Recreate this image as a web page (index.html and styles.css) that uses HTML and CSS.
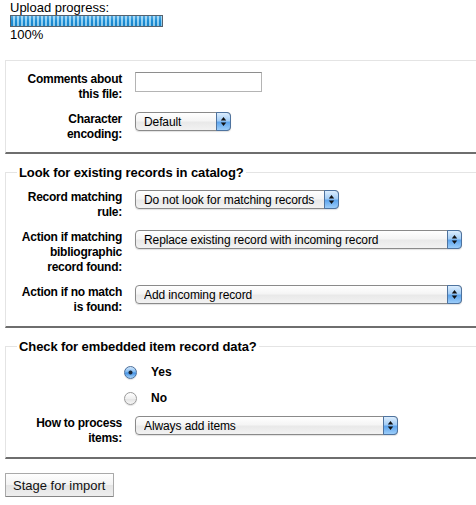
FILE: index.html
```html
<!DOCTYPE html>
<html>
<head>
<meta charset="utf-8">
<title>Stage MARC records</title>
<link rel="stylesheet" href="styles.css">
</head>
<body>
<div class="progress">
  <div class="ptitle">Upload progress:</div>
  <div class="bar"><div class="fill" style="width:100%"></div></div>
  <div class="pct">100%</div>
</div>
<form class="form">
  <fieldset class="fs fs-plain">
    <div class="row">
      <label class="lbl" for="comments">Comments about this file:</label>
      <input class="txt" id="comments" type="text">
    </div>
    <div class="row">
      <label class="lbl" for="enc">Character encoding:</label>
      <span class="sel w-def"><select id="enc"><option>Default</option></select><span class="arr"><svg width="7" height="11" viewBox="0 0 7 11"><polygon points="3.5,1 6.2,4.6 0.8,4.6"/><polygon points="0.8,6.4 6.2,6.4 3.5,10"/></svg></span></span>
    </div>
  </fieldset>

  <fieldset class="fs">
    <legend class="lg">Look for existing records in catalog?</legend>
    <div class="row">
      <label class="lbl" for="rule">Record matching rule:</label>
      <span class="sel w-rule"><select id="rule"><option>Do not look for matching records</option></select><span class="arr"><svg width="7" height="11" viewBox="0 0 7 11"><polygon points="3.5,1 6.2,4.6 0.8,4.6"/><polygon points="0.8,6.4 6.2,6.4 3.5,10"/></svg></span></span>
    </div>
    <div class="row">
      <label class="lbl" for="overlay">Action if matching bibliographic record found:</label>
      <span class="sel w-wide"><select id="overlay"><option>Replace existing record with incoming record</option></select><span class="arr"><svg width="7" height="11" viewBox="0 0 7 11"><polygon points="3.5,1 6.2,4.6 0.8,4.6"/><polygon points="0.8,6.4 6.2,6.4 3.5,10"/></svg></span></span>
    </div>
    <div class="row">
      <label class="lbl" for="nomatch">Action if no match is found:</label>
      <span class="sel w-wide"><select id="nomatch"><option>Add incoming record</option></select><span class="arr"><svg width="7" height="11" viewBox="0 0 7 11"><polygon points="3.5,1 6.2,4.6 0.8,4.6"/><polygon points="0.8,6.4 6.2,6.4 3.5,10"/></svg></span></span>
    </div>
  </fieldset>

  <fieldset class="fs">
    <legend class="lg">Check for embedded item record data?</legend>
    <div class="row radio-row">
      <input class="rad" type="radio" name="items" id="yes" checked>
      <label class="rlbl" for="yes">Yes</label>
    </div>
    <div class="row radio-row">
      <input class="rad" type="radio" name="items" id="no">
      <label class="rlbl" for="no">No</label>
    </div>
    <div class="row">
      <label class="lbl" for="proc">How to process items:</label>
      <span class="sel w-items"><select id="proc"><option>Always add items</option></select><span class="arr"><svg width="7" height="11" viewBox="0 0 7 11"><polygon points="3.5,1 6.2,4.6 0.8,4.6"/><polygon points="0.8,6.4 6.2,6.4 3.5,10"/></svg></span></span>
    </div>
  </fieldset>

  <button class="btn" type="button">Stage for import</button>
</form>
</body>
</html>
```

FILE: styles.css
```css
html, body {
  overflow: hidden;
}
body {
  margin: 0 0 0 5px;
  background: #fff;
  color: #000;
  font-family: "Liberation Sans", Arial, sans-serif;
  font-size: 13px;
  line-height: 15px;
}

.progress {
  margin-left: 5px;
}
.bar {
  width: 151px;
  height: 10px;
  border: 1px solid #56626e;
  background: #cfe6f5;
}
.fill {
  height: 100%;
  background:
    linear-gradient(rgba(255,255,255,0.25), rgba(255,255,255,0) 50%, rgba(0,0,0,0.06)),
    repeating-linear-gradient(90deg, #1b8cd4 0 2px, #92d1f3 2px 4px);
}

.form {
  margin: 0;
}

.fs {
  margin: 11px -20px 0 0;
  padding: 10px 0 1px 0;
  min-width: 0;
  border: none;
  border-top: 1px solid #e4e4e4;
  border-left: 1px solid #e4e4e4;
  border-bottom: 2px solid #6e6e6e;
}
.fs-plain {
  margin-top: 18px;
  padding: 11px 0 0 0;
}
.lg {
  margin-left: 11px;
  padding: 0 2px;
  font-weight: bold;
  font-size: 13px;
  line-height: 15px;
  letter-spacing: -0.1px;
}

.row {
  display: flex;
  align-items: flex-start;
  margin-bottom: 10px;
}
.lbl {
  width: 110px;
  margin: 0 13px 0 6px;
  text-align: right;
  font-weight: bold;
  font-size: 12px;
  line-height: 15px;
  letter-spacing: -0.25px;
}

.txt {
  box-sizing: border-box;
  width: 127px;
  height: 20px;
  margin: 0;
  border: 1px solid #b4b4b4;
  border-top-color: #8e8e8e;
  background: #fff;
  font: 12px "Liberation Sans", Arial, sans-serif;
  padding: 0 3px;
}

.sel {
  position: relative;
  display: inline-block;
  height: 19px;
}
.w-def { width: 96px; }
.w-rule { width: 204px; }
.w-wide { width: 327px; }
.w-items { width: 263px; }

.sel select {
  -webkit-appearance: none;
  appearance: none;
  box-sizing: border-box;
  width: 100%;
  height: 19px;
  margin: 0;
  padding: 0 0 0 8px;
  border: 1px solid #8a8a8a;
  border-radius: 4px;
  background: linear-gradient(#ffffff, #f5f5f5 45%, #e9e9e9 55%, #f2f2f2);
  box-shadow: 0 1px 1px rgba(0,0,0,0.12);
  color: #000;
  font: 12px "Liberation Sans", Arial, sans-serif;
  letter-spacing: -0.1px;
}
.arr {
  position: absolute;
  top: 0;
  right: 0;
  box-sizing: border-box;
  width: 15px;
  height: 19px;
  display: flex;
  align-items: center;
  justify-content: center;
  border: 1px solid #4e739f;
  border-radius: 0 4px 4px 0;
  background: linear-gradient(#dcedfd, #a3cdf6 45%, #5ea5ed 55%, #9ccdf9);
}
.arr svg {
  display: block;
  fill: #111;
}

.radio-row {
  align-items: center;
  height: 16px;
}
.rad {
  -webkit-appearance: none;
  appearance: none;
  box-sizing: border-box;
  width: 13px;
  height: 13px;
  margin: 1px 14px 0 118px;
  border-radius: 50%;
  border: 1px solid #9b9b9b;
  background: linear-gradient(#ffffff, #efefef 50%, #e2e2e2 52%, #f6f6f6);
  box-shadow: 0 1px 1px rgba(0,0,0,0.12);
}
.rad:checked {
  border-color: #4d709b;
  background:
    radial-gradient(circle, #1c2a3b 0 1.6px, rgba(28,42,59,0) 2.4px),
    linear-gradient(#d3e8fc, #78b6f1 48%, #3f8fe4 52%, #a8d4fa);
}
.rlbl {
  margin-top: 1px;
  font-weight: bold;
  font-size: 12px;
  line-height: 15px;
}

.btn {
  margin: 14px 0 0 0;
  height: 24px;
  padding: 0 7px;
  border: 1px solid #a9a9a9;
  border-bottom-color: #858585;
  border-radius: 1px;
  background: linear-gradient(#fefefe, #f3f3f3 50%, #e5e5e5 52%, #eeeeee);
  color: #111;
  font: 13px "Liberation Sans", Arial, sans-serif;
}
```
